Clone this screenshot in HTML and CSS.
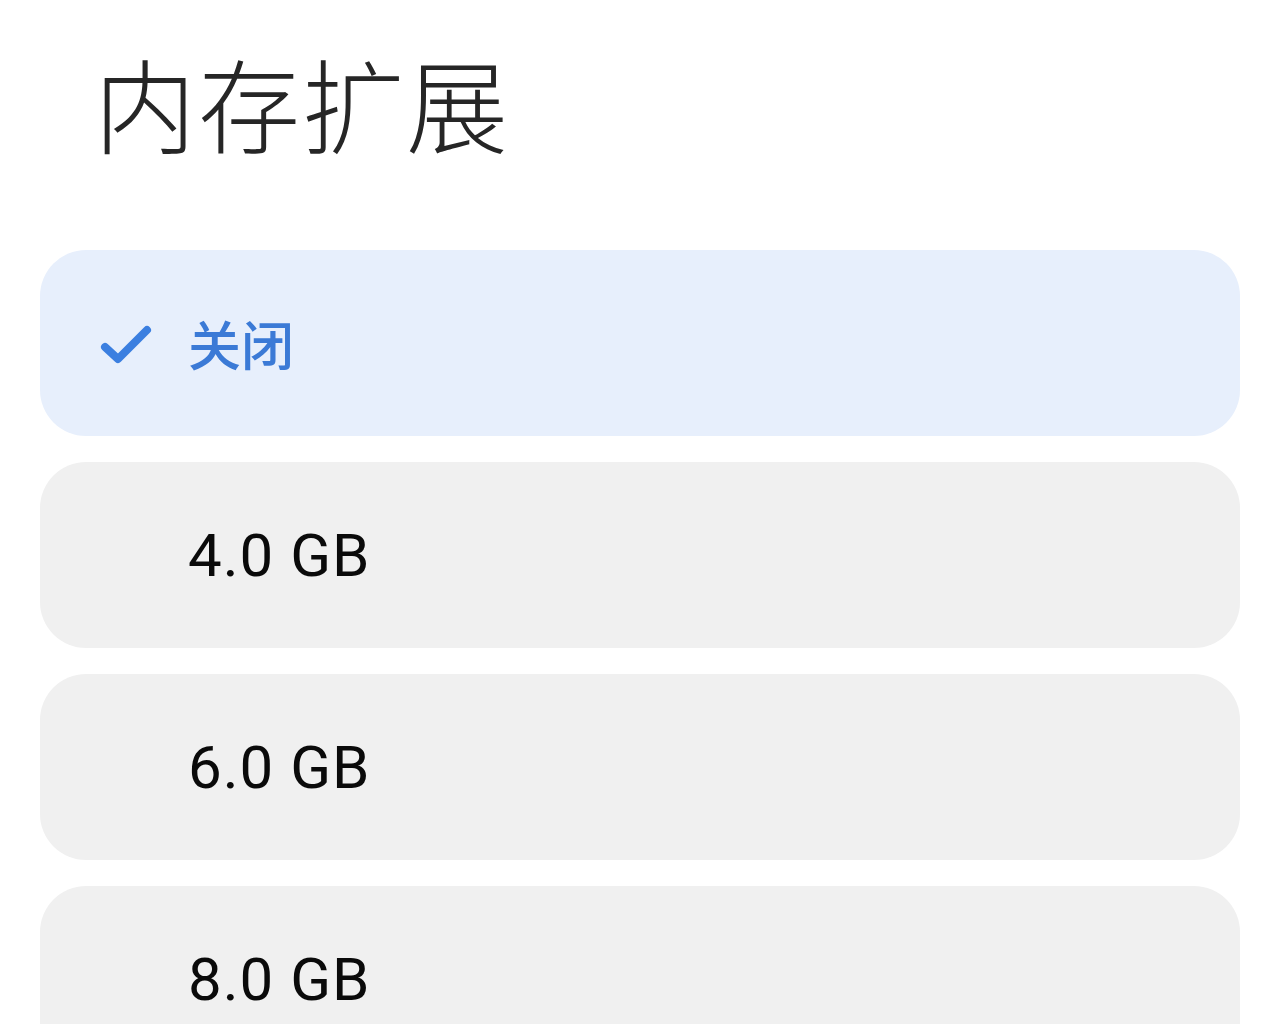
FILE: index.html
```html
<!DOCTYPE html>
<html lang="zh-CN">
<head>
  <meta charset="UTF-8" />
  <title>内存扩展</title>
  <link rel="stylesheet" href="styles.css">
</head>
<body>
  <div class="page">
    <h1 class="title">内存扩展</h1>

    <div class="options">
      <div class="option selected">
        <span class="check">
          <svg width="52" height="42" viewBox="0 0 52 42">
            <path d="M5 25 L18 37 L47 8" fill="none" stroke="#3b7fe0" stroke-width="8" stroke-linecap="round" stroke-linejoin="round"/>
          </svg>
        </span>
        <span class="label cjk">关闭</span>
      </div>
      <div class="option">
        <span class="check"></span>
        <span class="label">4.0 GB</span>
      </div>
      <div class="option">
        <span class="check"></span>
        <span class="label">6.0 GB</span>
      </div>
      <div class="option">
        <span class="check"></span>
        <span class="label">8.0 GB</span>
      </div>
    </div>
  </div>
</body>
</html>
```

FILE: styles.css
```css
body {
  margin: 0;
  background: #fff;
  font-family: Roboto, "Noto Sans CJK SC", sans-serif;
  color: #000;
  overflow: hidden;
}
.page {
  padding: 0 40px;
}
.title {
  margin: 0;
  padding: 46px 0 0 54px;
  height: 250px;
  box-sizing: border-box;
  font-family: "Noto Sans CJK SC", sans-serif;
  font-weight: 300;
  font-size: 102px;
  line-height: 1.1;
  letter-spacing: 2px;
  color: #262626;
}
.options {
  display: flex;
  flex-direction: column;
  gap: 26px;
}
.option {
  display: flex;
  align-items: center;
  height: 186px;
  border-radius: 46px;
  background: #f0f0f0;
  padding-left: 60px;
}
.option.selected {
  background: #e7effc;
}
.check {
  width: 88px;
  display: flex;
  align-items: center;
}
.label {
  font-size: 60px;
  letter-spacing: 1px;
  color: #0a0a0a;
}
.label.cjk {
  font-family: "Noto Sans CJK SC", sans-serif;
  font-weight: 500;
  font-size: 53px;
  letter-spacing: 0;
  color: #3b7ad6;
}
```
